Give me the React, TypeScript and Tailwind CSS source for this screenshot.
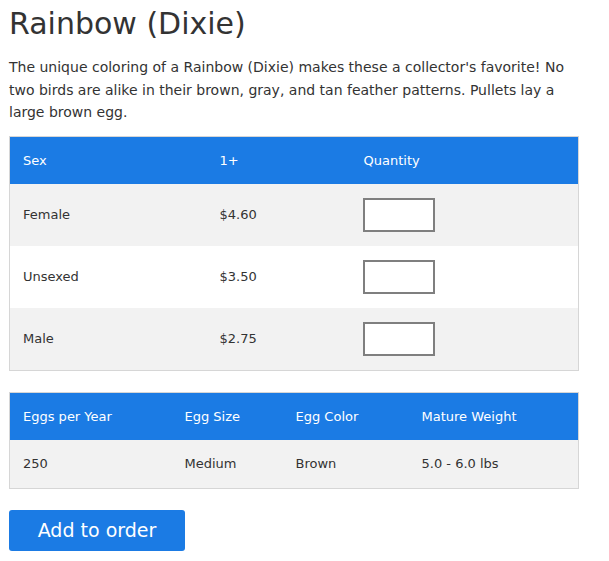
const prices = [
  { sex: "Female", price: "$4.60", bg: "bg-[#f2f2f2]" },
  { sex: "Unsexed", price: "$3.50", bg: "bg-white" },
  { sex: "Male", price: "$2.75", bg: "bg-[#f2f2f2]" },
];

export default function App() {
  return (
    <div className="px-[9px] pt-[4px] text-[#333] font-['DejaVu_Sans',sans-serif]">
      <h1 className="text-[30px] leading-[40px] font-normal">Rainbow (Dixie)</h1>
      <p className="mt-[12px] text-[14px] leading-[22.5px] w-[575px]">
        The unique coloring of a Rainbow (Dixie) makes these a collector's favorite! No two birds are
        alike in their brown, gray, and tan feather patterns. Pullets lay a large brown egg.
      </p>

      <table className="mt-[12px] w-[570px] table-fixed border border-[#d6d6d6] border-collapse text-[13px]">
        <thead>
          <tr className="bg-[#1b7be4] text-white h-[48px]">
            <th className="font-normal text-left pl-[13px] w-[210px]">Sex</th>
            <th className="font-normal text-left w-[144px]">1+</th>
            <th className="font-normal text-left">Quantity</th>
          </tr>
        </thead>
        <tbody>
          {prices.map((r) => (
            <tr key={r.sex} className={`${r.bg} h-[62px]`}>
              <td className="pl-[13px]">{r.sex}</td>
              <td>{r.price}</td>
              <td>
                <input
                  type="text"
                  className="block w-[72px] h-[34px] -ml-px border-2 border-[#7f7f7f] bg-white outline-none"
                />
              </td>
            </tr>
          ))}
        </tbody>
      </table>

      <table className="mt-[21px] w-[570px] table-fixed border border-[#d6d6d6] border-collapse text-[13px]">
        <thead>
          <tr className="bg-[#1b7be4] text-white h-[48px]">
            <th className="font-normal text-left pl-[13px] w-[175px]">Eggs per Year</th>
            <th className="font-normal text-left w-[111px]">Egg Size</th>
            <th className="font-normal text-left w-[126px]">Egg Color</th>
            <th className="font-normal text-left">Mature Weight</th>
          </tr>
        </thead>
        <tbody>
          <tr className="bg-[#f2f2f2] h-[48px]">
            <td className="pl-[13px]">250</td>
            <td>Medium</td>
            <td>Brown</td>
            <td>5.0 - 6.0 lbs</td>
          </tr>
        </tbody>
      </table>

      <button className="mt-[21px] w-[176px] h-[41px] rounded-[3px] bg-[#1b7be4] text-white text-[19px]">
        Add to order
      </button>
    </div>
  );
}
